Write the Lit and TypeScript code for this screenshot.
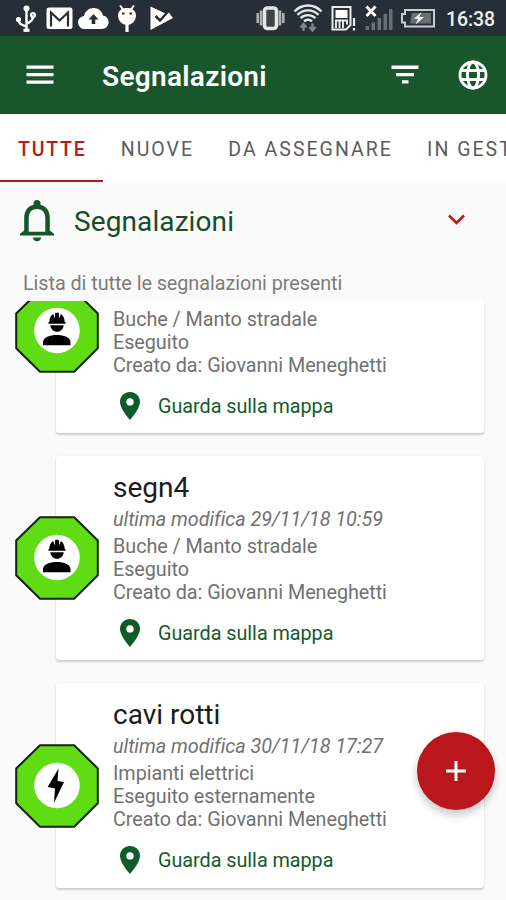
import { LitElement, html, css, svg, nothing } from "lit";
import { customElement, property, state } from "lit/decorators.js";
import { classMap } from "lit/directives/class-map.js";

type Kind = "worker" | "bolt";

interface Report {
  title?: string;
  modified?: string;
  category: string;
  status: string;
  author: string;
  kind: Kind;
}

const REPORTS: Report[] = [
  { category: "Buche / Manto stradale", status: "Eseguito", author: "Giovanni Meneghetti", kind: "worker" },
  { title: "segn4", modified: "29/11/18 10:59", category: "Buche / Manto stradale", status: "Eseguito", author: "Giovanni Meneghetti", kind: "worker" },
  { title: "cavi rotti", modified: "30/11/18 17:27", category: "Impianti elettrici", status: "Eseguito esternamente", author: "Giovanni Meneghetti", kind: "bolt" },
];

@customElement("status-bar")
export class StatusBar extends LitElement {
  static styles = css`
    :host { display: flex; height: 36px; background: #262f37; color: #fff; justify-content: space-between; }
    .group { display: flex; align-items: center; }
    .left { padding-left: 15px; }
    .right { padding-right: 10px; }
    svg { display: block; height: 36px; flex: none; }
    .clock { font-size: 19.5px; line-height: 36px; width: 50px; margin-left: 10px; padding-top: 3px; color: #eceef0; font-weight: 500; letter-spacing: -0.1px; white-space: nowrap; }
  `;
  render() {
    return html`
      <div class="group left">
        <svg width="22" viewBox="0 0 22 36" fill="none" stroke="#fff" stroke-width="2.400">
          <path d="M11.5 8v22M11.5 26.500C5 24.500 3.500 23 3.500 19.500M11.500 23.500C17 21.500 18 19 18 17" />
          <circle cx="3.500" cy="19.500" r="1.400" fill="#fff" /><circle cx="18" cy="15" r="1.900" />
          <circle cx="11.500" cy="8.500" r="3" fill="#fff" stroke="none" /><path d="M8.500 30.300h6" stroke-width="3.200" />
        </svg>
        <svg width="41" viewBox="0 0 41 36">
          <rect x="9.500" y="7.500" width="26" height="21.500" rx="2.500" fill="#fff" />
          <path d="M14 26.500V12.500l8.500 8 8.500-8v14" fill="none" stroke="#262f37" stroke-width="2.200" />
        </svg>
        <svg width="31" viewBox="0 0 31 36">
          <path d="M7 29a6.500 6.500 0 0 1-1-13C7 11 11 8 15.500 8c5 0 8.500 3 9.500 7.500A6.800 6.800 0 0 1 24 29z" fill="#fff" />
          <path d="M15.500 14l-5 5.500h3.200V24h3.600v-4.500h3.200z" fill="#262f37" />
        </svg>
        <svg width="34" viewBox="0 0 34 36">
          <path d="M11 5.500l3.500 4.500M25 5.500l-3.500 4.500" stroke="#fff" stroke-width="2" />
          <path d="M18 22v10" stroke="#fff" stroke-width="3.200" />
          <path d="M9 15.500C9 10.500 13 8 18 8s9 2.500 9 7.500S23 25 18 25s-9-4.500-9-9.500z" fill="#fff" />
          <path d="M13 13.500h2.500M20.500 13.500H23" stroke="#262f37" stroke-width="1.800" />
        </svg>
        <svg width="32" viewBox="0 0 32 36">
          <path d="M7.500 6.500l15 7 3-1.500 4.500 6L7.500 30z" fill="#fff" />
          <path d="M12.500 16l4.500 4.500L26.500 10" fill="none" stroke="#262f37" stroke-width="2.500" />
        </svg>
      </div>
      <div class="group right">
        <svg width="31" viewBox="-1 0 31 36">
          <path d="M1.700 13v10M5 10.500v15M24 10.500v15M27.300 13v10" stroke="#aeb3b6" stroke-width="2.500" />
          <rect x="8.500" y="8" width="12" height="20.500" rx="3" fill="#3c444a" stroke="#e4e6e7" stroke-width="3.600" />
        </svg>
        <svg width="37" viewBox="1 0 37 36" fill="none" stroke="#e6e8e9" stroke-width="2.400">
          <path d="M9.500 11.500c7.500-8 19.500-8 27 0M12.500 14.900c6-6 15-6 21 0M15.500 18.100c4.500-4 10.500-4 15 0M19 21.300c2.500-2 5.500-2 8 0" />
          <path d="M18.500 31v-6M15.500 27.500l3-3.500 3 3.500M27.500 23.500v6M24.500 27l3 3.500 3-3.500" stroke="#7e8589" />
        </svg>
        <svg width="33" viewBox="0 0 33 36">
          <path d="M9.500 7h18v18l-4.500 4.500H9.500z" fill="none" stroke="#e9ebec" stroke-width="2" />
          <path d="M12.500 10h12v8h-12z" fill="#fff" /><path d="M13 20v8M16.500 20v8M20 20v8M12 20.500h12v4" stroke="#e9ebec" stroke-width="1.900" fill="none" />
          <path d="M31 18v8M31 28v2.500" stroke="#e9ebec" stroke-width="2.200" />
        </svg>
        <svg width="37" viewBox="0 0 37 36">
          <path d="M9.500 26h3.500v4H9.500zM15.500 22.500h3.500V30h-3.500zM21.500 18h3.500v12h-3.500zM27.500 14h3.500v16h-3.500zM33 9h3.500v21H33z" fill="#687075" />
          <path d="M10.500 6.500l9 9.500M19.500 6.500l-9 9.500" stroke="#fff" stroke-width="2.800" />
        </svg>
        <svg width="43" viewBox="0 0 43 36">
          <path d="M12 10h29v16.500H12v-4H9v-8.500h3z" fill="none" stroke="#c7cbcd" stroke-width="2" />
          <path d="M19 13h19v10.500H17z" fill="#687075" />
          <path d="M28.500 12l-7.500 6.800h4.300L22.500 24.500l8.500-7.500h-4.800z" fill="#fff" />
        </svg>
        <div class="clock">16:38</div>
      </div>`;
  }
}

@customElement("report-badge")
export class ReportBadge extends LitElement {
  @property() kind: Kind = "worker";
  static styles = css`
    :host { display: block; width: 84px; height: 84px; }
    svg { display: block; }
  `;
  render() {
    const glyph = this.kind === "worker"
      ? svg`<path d="M33.500 34.800v-1.900h.8c.2-4 1.500-6.500 3.900-7.900l1.500 4.500.5-5.800h3.600l.5 5.800 1.500-4.500c2.400 1.400 3.700 3.900 3.900 7.900h.8v1.900z" />
            <path d="M35.300 36.200h13.400c-.4 4-3.300 6.500-6.700 6.500s-6.300-2.500-6.700-6.500z" />
            <path d="M28 56.300v-3.300c0-4.600 7-7 13.800-7s13.700 2.400 13.700 7v3.300z" />`
      : svg`<path d="M43.500 24.500L32.700 43l7.300 1.500L39 59l10-21-6.500-1z" />`;
    return html`<svg width="84" height="84" viewBox="0 0 84 84">
      <path d="M25 1.200h34.200L82.800 24.500v34.800L59.200 82.800H25L1.200 59.300V24.500z" fill="#60dc14" stroke="#142010" stroke-width="2" />
      <circle cx="42" cy="41.500" r="22.800" fill="#fff" />
      ${glyph}
    </svg>`;
  }
}

@customElement("report-card")
export class ReportCard extends LitElement {
  @property({ attribute: false }) report!: Report;
  static styles = css`
    :host { display: block; position: relative; height: 204.700px; box-sizing: border-box; padding: 15px 0 0 57px; background: #fff; border-radius: 3px; box-shadow: 0 2px 2px rgba(0, 0, 0, 0.17), 0 0 2px rgba(0, 0, 0, 0.07); }
    :host(.scrolled) { height: 132px; padding-top: 6.600px; border-radius: 0 0 3px 3px; }
    .badge { position: absolute; left: -41px; bottom: 60px; }
    .title { font-size: 28px; line-height: 33px; color: #1b1b1b; }
    .line { font-size: 19.800px; line-height: 23.100px; letter-spacing: -0.05px; color: #717171; white-space: nowrap; }
    .modified { font-style: italic; margin: 4px 0 4px; }
    .map { display: flex; align-items: center; margin-top: 15px; padding-left: 6px; color: #155a2b; font-size: 19.800px; letter-spacing: -0.03px; line-height: 28px; }
    .map svg { width: 22px; height: 28px; margin-right: 17px; display: block; }
    .map span { padding-top: 2px; line-height: 26px; }
  `;
  render() {
    const r = this.report;
    if (!r) return nothing;
    return html`
      <report-badge class="badge" .kind=${r.kind}></report-badge>
      ${r.title ? html`<div class="title">${r.title}</div>` : nothing}
      ${r.modified ? html`<div class="line modified">ultima modifica ${r.modified}</div>` : nothing}
      <div class="line">${r.category}</div>
      <div class="line">${r.status}</div>
      <div class="line">Creato da: ${r.author}</div>
      <div class="map">
        <svg viewBox="0 0 22 28"><path fill-rule="evenodd" fill="#0d5a2a" d="M11 0C5.300 0 1 4.300 1 9.800 1 17 11 28 11 28s10-11 10-18.200C21 4.300 16.700 0 11 0zm0 6.200a3.700 3.700 0 1 1 0 7.400 3.700 3.700 0 0 1 0-7.400z" /></svg>
        <span>Guarda sulla mappa</span>
      </div>`;
  }
}

@customElement("app-root")
export class AppRoot extends LitElement {
  @state() private active = 0;
  private tabs = ["TUTTE", "NUOVE", "DA ASSEGNARE", "IN GESTIONE"];

  static styles = css`
    :host { display: flex; flex-direction: column; position: relative; width: 100%; height: 900px; overflow: hidden; background: #fafafa; font-family: Roboto, "Liberation Sans", sans-serif; }
    svg { display: block; flex: none; }
    .bar { display: flex; align-items: center; flex: none; height: 78px; box-sizing: border-box; padding: 0 18px 0 26px; background: #19562c; color: #fff; }
    .bar h1 { flex: 1; margin: 3px 0 0 48px; font-size: 28px; line-height: 34px; font-weight: 600; letter-spacing: 0.300px; }
    .filter { margin-right: 39px; }
    .tabs { display: flex; flex: none; height: 68px; background: #fff; overflow: hidden; }
    .tab { flex: none; box-sizing: border-box; height: 68px; padding: 0 16.200px 0 18px; line-height: 72px; font-size: 19.500px; letter-spacing: 2.020px; color: #5c5c5c; border-bottom: 2.500px solid transparent; white-space: nowrap; }
    .tab.on { color: #b9191d; border-bottom-color: #b9191d; font-weight: 500; letter-spacing: 1.800px; }
    .head { display: flex; align-items: center; flex: none; height: 78px; box-sizing: border-box; padding: 0 40px 0 20px; color: #154d27; }
    .head h2 { flex: 1; margin: 2px 0 0 20px; font-size: 28px; line-height: 34px; font-weight: 400; letter-spacing: 0.100px; }
    .chevron { margin-top: -3px; }
    .hint { flex: none; height: 41px; padding-left: 23px; line-height: 48px; font-size: 19.800px; letter-spacing: -0.05px; color: #7c7c7c; }
    .list { flex: 1; min-height: 0; overflow: hidden; padding: 0 22px 0 56px; }
    .cards { display: flex; flex-direction: column; gap: 22.600px; }
    .fab { position: absolute; right: 11px; bottom: 90px; width: 78px; height: 78px; border: 0; padding: 0; border-radius: 50%; background: #b9171b; box-shadow: 0 5px 8px rgba(0, 0, 0, 0.22); display: flex; align-items: center; justify-content: center; }
  `;

  render() {
    return html`
      <status-bar></status-bar>
      <header class="bar">
        <svg width="28" height="20" viewBox="0 0 28 20" fill="#fff"><path d="M.5 .5h27v3.300H.5zM.5 8h27v3.300H.5zM.5 15.500h27v3.300H.5z" /></svg>
        <h1>Segnalazioni</h1>
        <svg class="filter" width="28" height="20" viewBox="0 0 28 20" fill="#fff"><path d="M.5 .5h27v3.600H.5zM5 8h18v3.300H5zM11 15.200h6.500v3.300H11z" /></svg>
        <svg width="30" height="30" viewBox="0 0 30 30" fill="none" stroke="#fff" stroke-width="2.900">
          <circle cx="15" cy="15" r="13" /><ellipse cx="15" cy="15" rx="5.600" ry="13" /><path d="M3 10.500h24M3 19.500h24" />
        </svg>
      </header>
      <nav class="tabs">
        ${this.tabs.map((t, i) => html`<div class=${classMap({ tab: true, on: i === this.active })} @click=${() => (this.active = i)}>${t}</div>`)}
      </nav>
      <section class="head">
        <svg width="34" height="42" viewBox="0 0 34 42">
          <path d="M0 35.500v-1.700l4.200-3.300V18c0-7 3.300-11.700 9.300-13.300V3.500a3.500 3.500 0 0 1 7 0v1.200C26.500 6.300 29.800 11 29.800 18v12.500l4.200 3.300v1.700z" fill="#15552a" />
          <path d="M8.700 31.800V18.500c0-6 2.800-9.600 8.300-9.600s8.300 3.600 8.300 9.600v13.300z" fill="#fafafa" />
          <path d="M12.800 37.500h8.400c-.4 2.300-2 3.700-4.200 3.700s-3.800-1.400-4.200-3.700z" fill="#15552a" />
        </svg>
        <h2>Segnalazioni</h2>
        <svg class="chevron" width="19" height="12" viewBox="0 0 19 12" fill="none" stroke="#b9191d" stroke-width="2.600"><path d="M2 1.500l7.500 7.500L17 1.500" /></svg>
      </section>
      <div class="hint">Lista di tutte le segnalazioni presenti</div>
      <main class="list">
        <div class="cards">${REPORTS.map((r) => html`<report-card class=${classMap({ scrolled: !r.title })} .report=${r}></report-card>`)}</div>
      </main>
      <button class="fab" aria-label="Aggiungi">
        <svg width="22" height="22" viewBox="0 0 22 22" stroke="#fff" stroke-width="3"><path d="M11 1v20M1 11h20" /></svg>
      </button>`;
  }
}
